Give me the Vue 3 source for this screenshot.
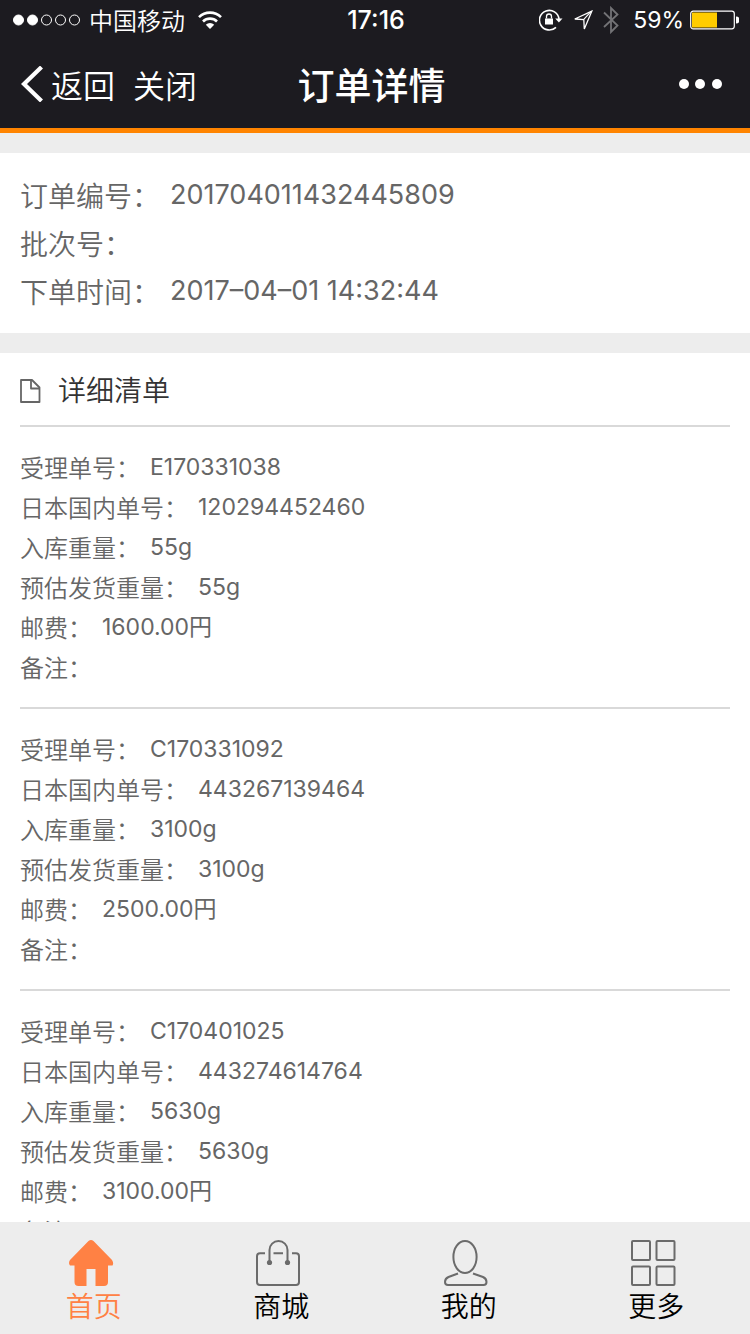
<script setup>
import { ref } from "vue";

const summary = [
  { label: "订单编号", value: "201704011432445809" },
  { label: "批次号", value: "" },
  { label: "下单时间", value: "2017–04–01 14:32:44" },
];

const parcels = [
  { id: "E170331038", trackingNo: "120294452460", weight: "55g", estimate: "55g", postage: "1600.00円", remark: "" },
  { id: "C170331092", trackingNo: "443267139464", weight: "3100g", estimate: "3100g", postage: "2500.00円", remark: "" },
  { id: "C170401025", trackingNo: "443274614764", weight: "5630g", estimate: "5630g", postage: "3100.00円", remark: "" },
];

const fields = [
  { key: "id", label: "受理单号" },
  { key: "trackingNo", label: "日本国内单号" },
  { key: "weight", label: "入库重量" },
  { key: "estimate", label: "预估发货重量" },
  { key: "postage", label: "邮费" },
  { key: "remark", label: "备注" },
];

const tabs = [
  { key: "home", label: "首页" },
  { key: "mall", label: "商城" },
  { key: "mine", label: "我的" },
  { key: "more", label: "更多" },
];

const active = ref("home");
</script>

<template>
  <div class="page">
    <header class="header">
      <div class="status">
        <div class="status-left">
          <svg class="signal" width="68" height="12" viewBox="0 0 68 12">
            <g fill="#fff" stroke="#fff">
              <circle cx="5.5" cy="6" r="5" />
              <circle cx="19.5" cy="6" r="5" />
            </g>
            <g fill="none" stroke="#fff">
              <circle cx="33.5" cy="6" r="5" />
              <circle cx="47.5" cy="6" r="5" />
              <circle cx="61.5" cy="6" r="5" />
            </g>
          </svg>
          <span class="carrier">中国移动</span>
          <svg width="26" height="18" viewBox="0 0 26 18">
            <g fill="none" stroke="#fff" stroke-width="2.6">
              <path d="M2 6.200a15.600 15.600 0 0 1 22 0" />
              <path d="M6 10.500a10 10 0 0 1 14 0" />
            </g>
            <path d="M13 18l-4.200-4.300a6 6 0 0 1 8.400 0z" fill="#fff" />
          </svg>
        </div>
        <span class="clock">17:16</span>
        <div class="status-right">
          <svg width="24" height="22" viewBox="0 0 24 22">
            <path d="M17 18.300A9.800 9.800 0 1 1 20 10" fill="none" stroke="#fff" stroke-width="1.600" />
            <path d="M16.200 9.500h7.300l-3.600 4z" fill="#fff" />
            <rect x="6" y="9.500" width="8" height="6" fill="#fff" />
            <path d="M7.500 9.500V7.500a2.500 2.500 0 0 1 5 0v2" fill="none" stroke="#fff" stroke-width="1.300" />
          </svg>
          <svg class="locate" width="20" height="21" viewBox="0 0 20 21">
            <path d="M18.800 1.200L1.800 9l9 .500.500 9.500z" fill="none" stroke="#fff" stroke-width="1.300" />
            <path d="M11 9.200l7-7.500" stroke="#fff" stroke-width="1.200" />
          </svg>
          <svg class="bluetooth" width="16" height="28" viewBox="0 0 16 28">
            <path d="M1 6.500l13.500 13L8 26V2l6.500 6.500L1 21" fill="none" stroke="#737376" stroke-width="1.800" />
          </svg>
          <span class="percent">59%</span>
          <svg width="49" height="20" viewBox="0 0 49 20">
            <rect x="0.700" y="1.200" width="43.600" height="17.600" rx="2.500" fill="none" stroke="#fff" stroke-width="1.200" />
            <rect x="2" y="2.500" width="25" height="15" fill="#ffcc00" />
            <path d="M46 6.500a3.500 3.500 0 0 1 0 7z" fill="#fff" />
          </svg>
        </div>
      </div>
      <nav class="navbar">
        <div class="nav-left">
          <button class="nav-btn" type="button">
            <svg width="22" height="36" viewBox="0 0 22 36">
              <path d="M19 2.500L3 18l16 15.500" fill="none" stroke="#fff" stroke-width="4.200" stroke-linecap="square" stroke-linejoin="miter" />
            </svg>
            <span>返回</span>
          </button>
          <button class="nav-btn" type="button">关闭</button>
        </div>
        <h1 class="title">订单详情</h1>
        <button class="nav-btn more" type="button" aria-label="更多操作">
          <svg width="43" height="10" viewBox="0 0 43 10" fill="#fff">
            <circle cx="5" cy="5" r="5" />
            <circle cx="21" cy="5" r="5" />
            <circle cx="38" cy="5" r="5" />
          </svg>
        </button>
      </nav>
    </header>

    <main class="content">
      <section class="card summary">
        <div v-for="row in summary" :key="row.label" class="row">
          <span class="label">{{ row.label }}：</span>
          <span class="value">{{ row.value }}</span>
        </div>
      </section>

      <section class="card detail">
        <h2 class="detail-title">
          <svg width="22" height="28" viewBox="0 0 22 28" fill="none" stroke="#666" stroke-width="1.800" stroke-linejoin="round">
            <path d="M1 5h11l7.500 7.500V27H1z" />
            <path d="M11 5v8.500h8.500" />
          </svg>
          <span>详细清单</span>
        </h2>
        <div v-for="parcel in parcels" :key="parcel.id" class="parcel">
          <div v-for="field in fields" :key="field.key" class="row">
            <span class="label">{{ field.label }}：</span>
            <span class="value">{{ parcel[field.key] }}</span>
          </div>
        </div>
      </section>
    </main>

    <footer class="tabbar">
      <button
        v-for="tab in tabs"
        :key="tab.key"
        type="button"
        class="tab"
        :class="{ active: active === tab.key }"
        @click="active = tab.key"
      >
        <svg width="50" height="46" viewBox="0 0 50 46" fill="none" stroke="#6b6b6b" stroke-width="2">
          <path
            v-if="tab.key === 'home'"
            d="M19.500 1Q22 -1 24.500 1L43 20Q45 23 43.500 25.500H39V42Q39 46 35 46H26.500V29H17.500V46H9.500Q5.500 46 5.500 42V25.500H1Q-1 23 1 20z"
            fill="#ff8144"
            stroke="none"
          />
          <g v-else-if="tab.key === 'mall'">
            <path d="M9 13.300H4Q1 13.300 1 16.300V42Q1 45 4 45H40Q43 45 43 42V16.300Q43 13.300 40 13.300H36M17.500 13.300H27" />
            <path d="M13.500 22V10a9 9 0 0 1 18 0v12" />
            <g fill="#6b6b6b" stroke="none">
              <circle cx="13.500" cy="22.500" r="2.600" />
              <circle cx="31.500" cy="22.500" r="2.600" />
            </g>
          </g>
          <g v-else-if="tab.key === 'mine'">
            <ellipse cx="21" cy="17" rx="11.600" ry="16" />
            <path d="M14 33.500L4.500 37Q1 38.500 1 42Q1 45 4 45H39.500Q42.500 45 42.500 42Q42.500 38.500 39 37L29 33.500" />
          </g>
          <g v-else>
            <rect x="1" y="1" width="18" height="19" rx="1" />
            <rect x="25.500" y="1" width="18" height="19" rx="1" />
            <rect x="1" y="26.500" width="18" height="18.500" rx="1" />
            <rect x="25.500" y="26.500" width="18" height="18.500" rx="1" />
          </g>
        </svg>
        <span>{{ tab.label }}</span>
      </button>
    </footer>
  </div>
</template>

<style>
body {
  margin: 0;
}
</style>

<style scoped>
.page {
  display: flex;
  flex-direction: column;
  height: 100vh;
  background: #ededed;
  color: #666;
  font-family: Inter, "Noto Sans CJK SC", sans-serif;
  font-weight: 350;
}
svg {
  display: block;
  flex: none;
}
button {
  padding: 0;
  border: none;
  background: none;
  color: inherit;
  font: inherit;
  cursor: pointer;
}
.label,
.carrier {
  font-family: "Noto Sans CJK SC", sans-serif;
}

.header {
  flex: none;
  background: #1c1b20;
  border-bottom: 5px solid #ff8400;
  color: #fff;
}
.status {
  display: grid;
  grid-template-columns: 1fr auto 1fr;
  align-items: center;
  height: 40px;
  padding: 0 11px 0 13px;
  font-size: 24px;
  line-height: 40px;
}
.status-left,
.status-right {
  display: flex;
  align-items: center;
}
.status-right {
  justify-content: flex-end;
}
.carrier {
  margin: 0 12px 0 8px;
}
.clock {
  font-size: 25px;
  font-weight: 500;
}
.locate {
  margin: 0 10px;
}
.percent {
  margin: 0 6px 0 14px;
  font-size: 23px;
  font-weight: 400;
}
.navbar {
  display: grid;
  grid-template-columns: 1fr auto 1fr;
  align-items: center;
  height: 88px;
  padding: 0 28px 0 21px;
  font-size: 32px;
}
.nav-left {
  display: flex;
  gap: 18px;
}
.nav-btn {
  display: flex;
  align-items: center;
  gap: 8px;
}
.more {
  justify-self: end;
}
.title {
  margin: 0;
  font-size: 37px;
  font-weight: 500;
}

.content {
  flex: 1;
  min-height: 0;
  overflow-y: auto;
  scrollbar-width: none;
}
.card {
  margin-top: 20px;
  background: #fff;
}
.row {
  display: flex;
  gap: 10px;
}
.value {
  font-weight: 400;
}
.summary {
  padding: 18px 20px;
  font-size: 28px;
  line-height: 48px;
}
.summary .value {
  font-size: 27px;
}
.detail {
  padding: 0 20px;
}
.detail-title {
  display: flex;
  align-items: center;
  gap: 16px;
  height: 72px;
  margin: 0;
  border-bottom: 2px solid #d9d9d9;
  color: #333;
  font-size: 28px;
  font-weight: 350;
}
.parcel {
  padding: 20px 0;
  border-bottom: 2px solid #d9d9d9;
  font-size: 24px;
  line-height: 40px;
}
.parcel .value {
  font-size: 23px;
}

.tabbar {
  display: grid;
  grid-template-columns: repeat(4, 1fr);
  flex: none;
  height: 112px;
  background: #ededed;
}
.tab {
  display: flex;
  flex-direction: column;
  align-items: center;
  padding-top: 18px;
  color: #000;
  font-size: 28px;
  line-height: 42px;
}
.tab.active {
  color: #ff8144;
}
</style>
